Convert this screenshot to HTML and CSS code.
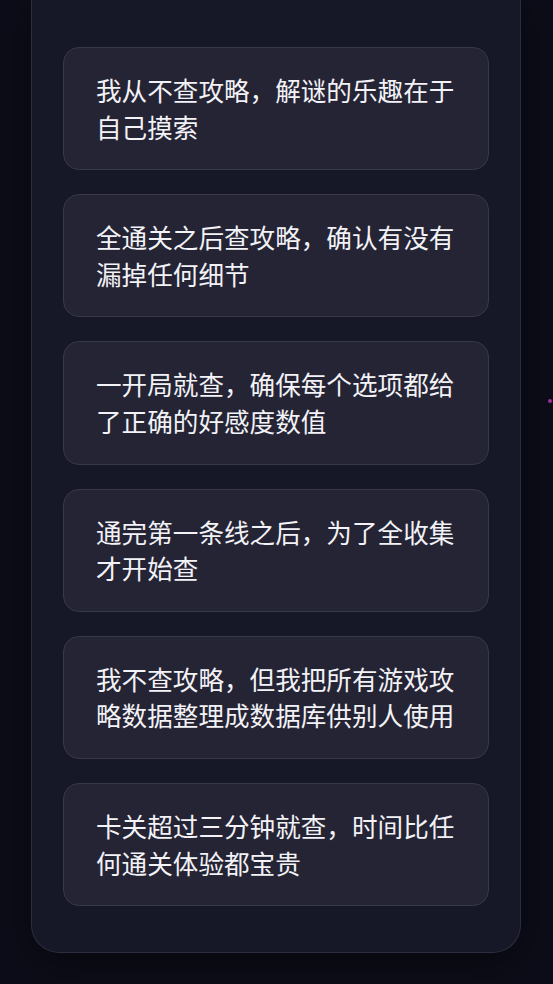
FILE: index.html
```html
<!DOCTYPE html>
<html lang="zh-CN">
<head>
  <meta charset="UTF-8">
  <title>攻略问卷</title>
  <link rel="stylesheet" href="styles.css">
</head>
<body>

  <div class="panel">
    <div class="options">
      <div class="option">我从不查攻略，解谜的乐趣在于自己摸索</div>
      <div class="option">全通关之后查攻略，确认有没有漏掉任何细节</div>
      <div class="option">一开局就查，确保每个选项都给了正确的好感度数值</div>
      <div class="option">通完第一条线之后，为了全收集才开始查</div>
      <div class="option">我不查攻略，但我把所有游戏攻略数据整理成数据库供别人使用</div>
      <div class="option">卡关超过三分钟就查，时间比任何通关体验都宝贵</div>
    </div>
  </div>

  <div class="spark"></div>

</body>
</html>
```

FILE: styles.css
```css
body {
  margin: 0;
  font-family: "Noto Sans CJK SC", "Noto Sans", sans-serif;
  background: #0d0d19;
  color: #f2f2f7;
  min-height: 100vh;
  position: relative;
  overflow: hidden;
}

.panel {
  width: 490px;
  margin: 0 0 0 31px;
  background: #171827;
  border: 1px solid #2d2d3f;
  border-top: none;
  border-radius: 0 0 28px 28px;
  padding: 47px 31px 46px;
  box-sizing: border-box;
  box-shadow: 0 10px 40px rgba(0, 0, 0, 0.45);
}

.options {
  display: flex;
  flex-direction: column;
  gap: 24px;
}

.option {
  background: #252434;
  border: 1px solid #383849;
  border-radius: 16px;
  padding: 24px 31px 24px 32px;
  font-size: 25.6px;
  line-height: 36.6px;
}

.spark {
  position: absolute;
  left: 548px;
  top: 399px;
  width: 4px;
  height: 4px;
  border-radius: 50%;
  background: #a0309a;
}
```
